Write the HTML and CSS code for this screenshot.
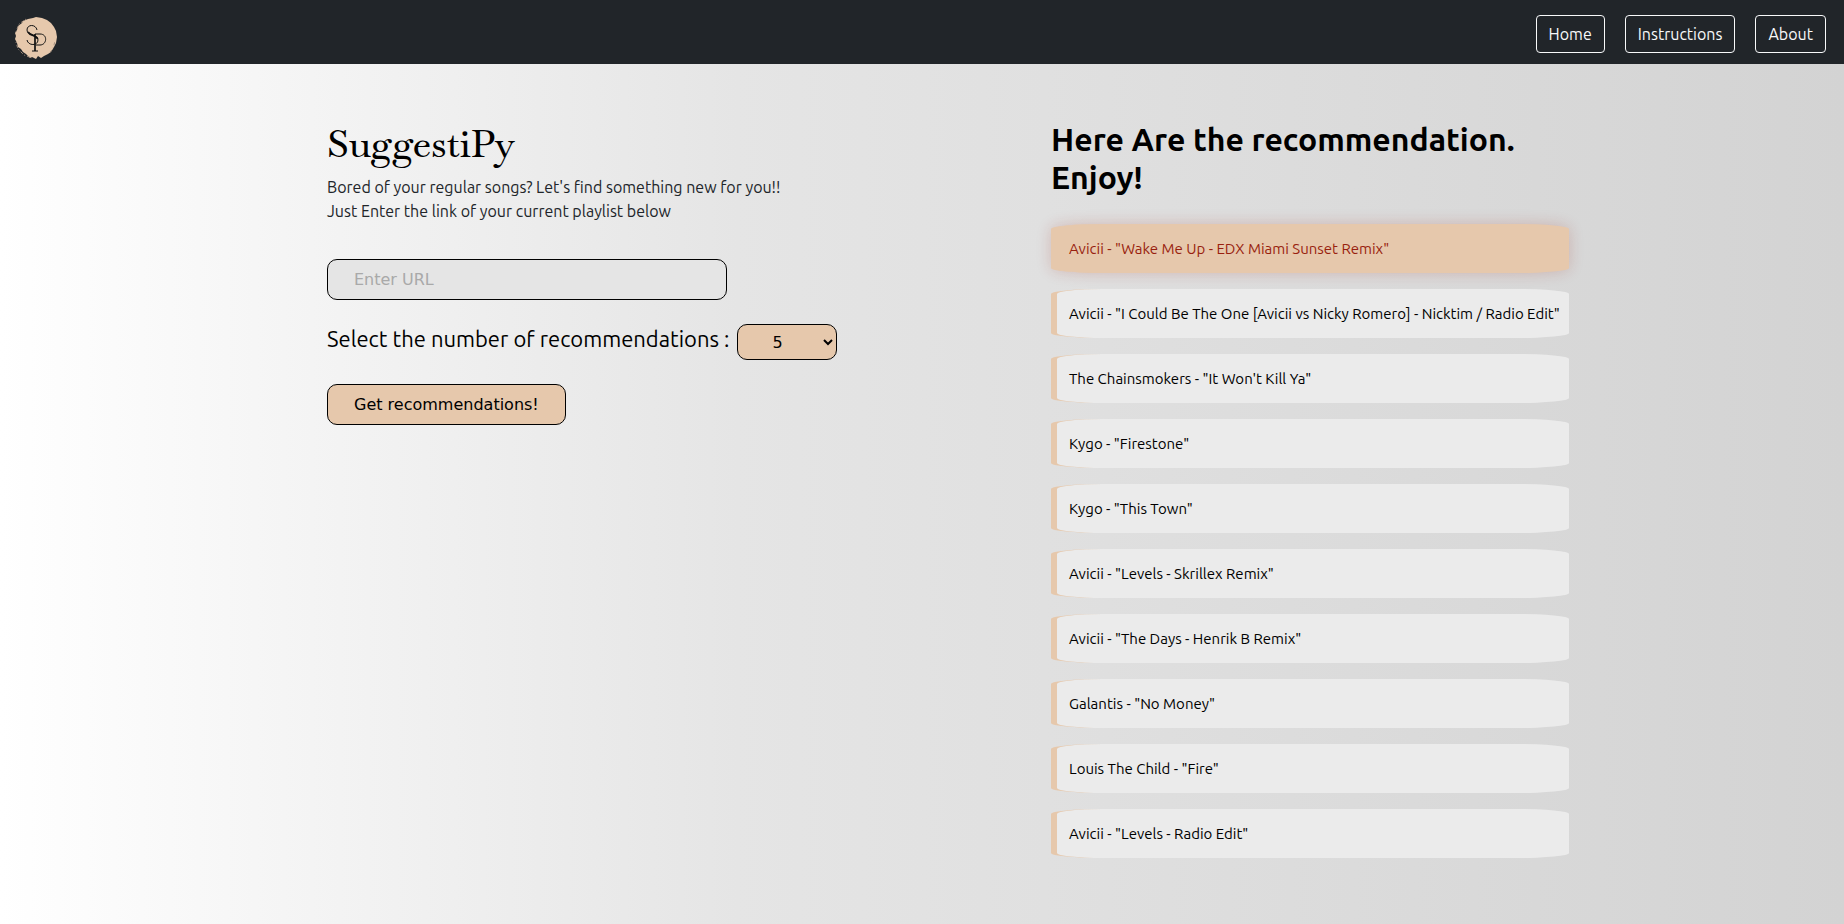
FILE: index.html
```html
<!DOCTYPE html>
<html lang="en">
<head>
<meta charset="utf-8">
<title>SuggestiPy</title>
<link rel="stylesheet" href="styles.css">
</head>
<body>
<header class="navbar">
  <a class="brand" href="#" aria-label="SuggestiPy home">
    <svg class="logo" viewBox="0 0 44 44" aria-hidden="true">
      <path fill="#e6c8ac" d="M14 3 19 2 22 1 28 2 33 4 37 7 40 11 42 15 43 21 42 27 40 31 37 36 34 38 30 40 27 42 24 40 22 43 18 41 16 42 12 38 9 36 7 33 4 31 3 27 1 23 2 20 1 17 3 14 4 10 8 7 9 5Z"/>
      <path fill="none" stroke="#a38f7e" stroke-width="1" stroke-dasharray="1 2 3 2" d="M12 3 5 8 2 16M2 26l2 7 6 6 8 3M34 38l5-5 2-8"/>
      <path fill="none" stroke="#111" stroke-width="1" d="M23 14C22 8 13 8 13 14c0 6 11 4 11 10 0 6-10 6-11 0M21 18h5c8 0 7 11 0 11h-4M18 35h6"/>
      <path fill="none" stroke="#111" stroke-width="1.7" d="M21 18v17M14 16c2 4 9 3 9.500 7"/>
    </svg>
  </a>
  <nav class="nav-links">
    <a class="nav-button" href="#">Home</a>
    <a class="nav-button" href="#">Instructions</a>
    <a class="nav-button" href="#">About</a>
  </nav>
</header>
<main class="content">
  <section class="intro">
    <h1 class="title">SuggestiPy</h1>
    <p class="lead">Bored of your regular songs? Let's find something new for you!!<br>Just Enter the link of your current playlist below</p>
    <form class="form">
      <input class="url" type="text" placeholder="Enter URL" aria-label="Playlist URL">
      <div class="count-row">
        <label class="count-label" for="count">Select the number of recommendations :</label>
        <select class="count" id="count"><option>5</option><option>10</option><option>15</option></select>
      </div>
      <button class="submit" type="button">Get recommendations!</button>
    </form>
  </section>
  <section class="results">
    <h2 class="results-title">Here Are the recommendation. Enjoy!</h2>
    <ul class="songs">
      <li class="song active">Avicii - "Wake Me Up - EDX Miami Sunset Remix"</li>
      <li class="song">Avicii - "I Could Be The One [Avicii vs Nicky Romero] - Nicktim / Radio Edit"</li>
      <li class="song">The Chainsmokers - "It Won't Kill Ya"</li>
      <li class="song">Kygo - "Firestone"</li>
      <li class="song">Kygo - "This Town"</li>
      <li class="song">Avicii - "Levels - Skrillex Remix"</li>
      <li class="song">Avicii - "The Days - Henrik B Remix"</li>
      <li class="song">Galantis - "No Money"</li>
      <li class="song">Louis The Child - "Fire"</li>
      <li class="song">Avicii - "Levels - Radio Edit"</li>
    </ul>
  </section>
</main>
</body>
</html>
```
FILE: styles.css
```css
* { box-sizing: border-box; }

body {
  margin: 0;
  min-height: 100vh;
  background: linear-gradient(to right, #fff, #e5e5e5 40%, #d3d3d3);
  color: #212529;
  font-family: Ubuntu, "Noto Sans", sans-serif;
  font-size: 16px;
  line-height: 24px;
}

.navbar {
  display: flex;
  justify-content: space-between;
  align-items: center;
  height: 64px;
  padding: 4px 18px 0 14px;
  background: #212529;
}

.brand { display: flex; padding-top: 8px; }
.logo { width: 44px; height: 44px; }
.nav-links { display: flex; gap: 20px; }

.nav-button {
  padding: 6px 12px;
  border: 1px solid #f8f9fa;
  border-radius: 4px;
  color: #f8f9fa;
  text-decoration: none;
}

.content {
  display: grid;
  grid-template-columns: 1fr 518px;
  gap: 48px;
  max-width: 1320px;
  margin: 0 auto;
  padding: 56px 13px 65px 65px;
}

.title {
  margin: 0 0 8px;
  color: #000;
  font-family: Baskervville, "Liberation Serif", serif;
  font-size: 38px;
  font-weight: 500;
  line-height: 47px;
}

.lead { margin: 0 0 36px; }

.form {
  display: flex;
  flex-direction: column;
  align-items: flex-start;
  gap: 24px;
}

.url, .count, .submit {
  border: 1px solid #000;
  border-radius: 10px;
  color: #000;
  font-family: "DejaVu Sans", sans-serif;
  font-size: 16px;
}

.url {
  width: 400px;
  max-width: 100%;
  height: 41px;
  padding: 0 26px;
  background: #e5e5e5;
}
.url::placeholder { color: #a9a9a9; }

.count-row { display: flex; gap: 8px; }
.count-label { color: #000; font-size: 22px; line-height: 30px; }
.count { width: 100px; height: 36px; padding-left: 30px; background: #e6c8ac; }
.submit { height: 41px; padding: 0 26px; background: #e6c8ac; }

.results-title {
  margin: 0 0 28px;
  color: #000;
  font-size: 32px;
  font-weight: 600;
  line-height: 38px;
}

.songs {
  display: grid;
  gap: 16px;
  margin: 0;
  padding: 0;
  list-style: none;
}

.song {
  padding: 12px 8px 12px 12px;
  border-left: 6px solid #e6c8ac;
  border-radius: 10%;
  background: #ebebeb;
  color: #000;
  font-size: 15px;
  line-height: 25px;
}

.active {
  background: #e6c8ac;
  box-shadow: 0 0 15px rgba(153, 31, 15, 0.2);
  color: #991f0f;
}
```
